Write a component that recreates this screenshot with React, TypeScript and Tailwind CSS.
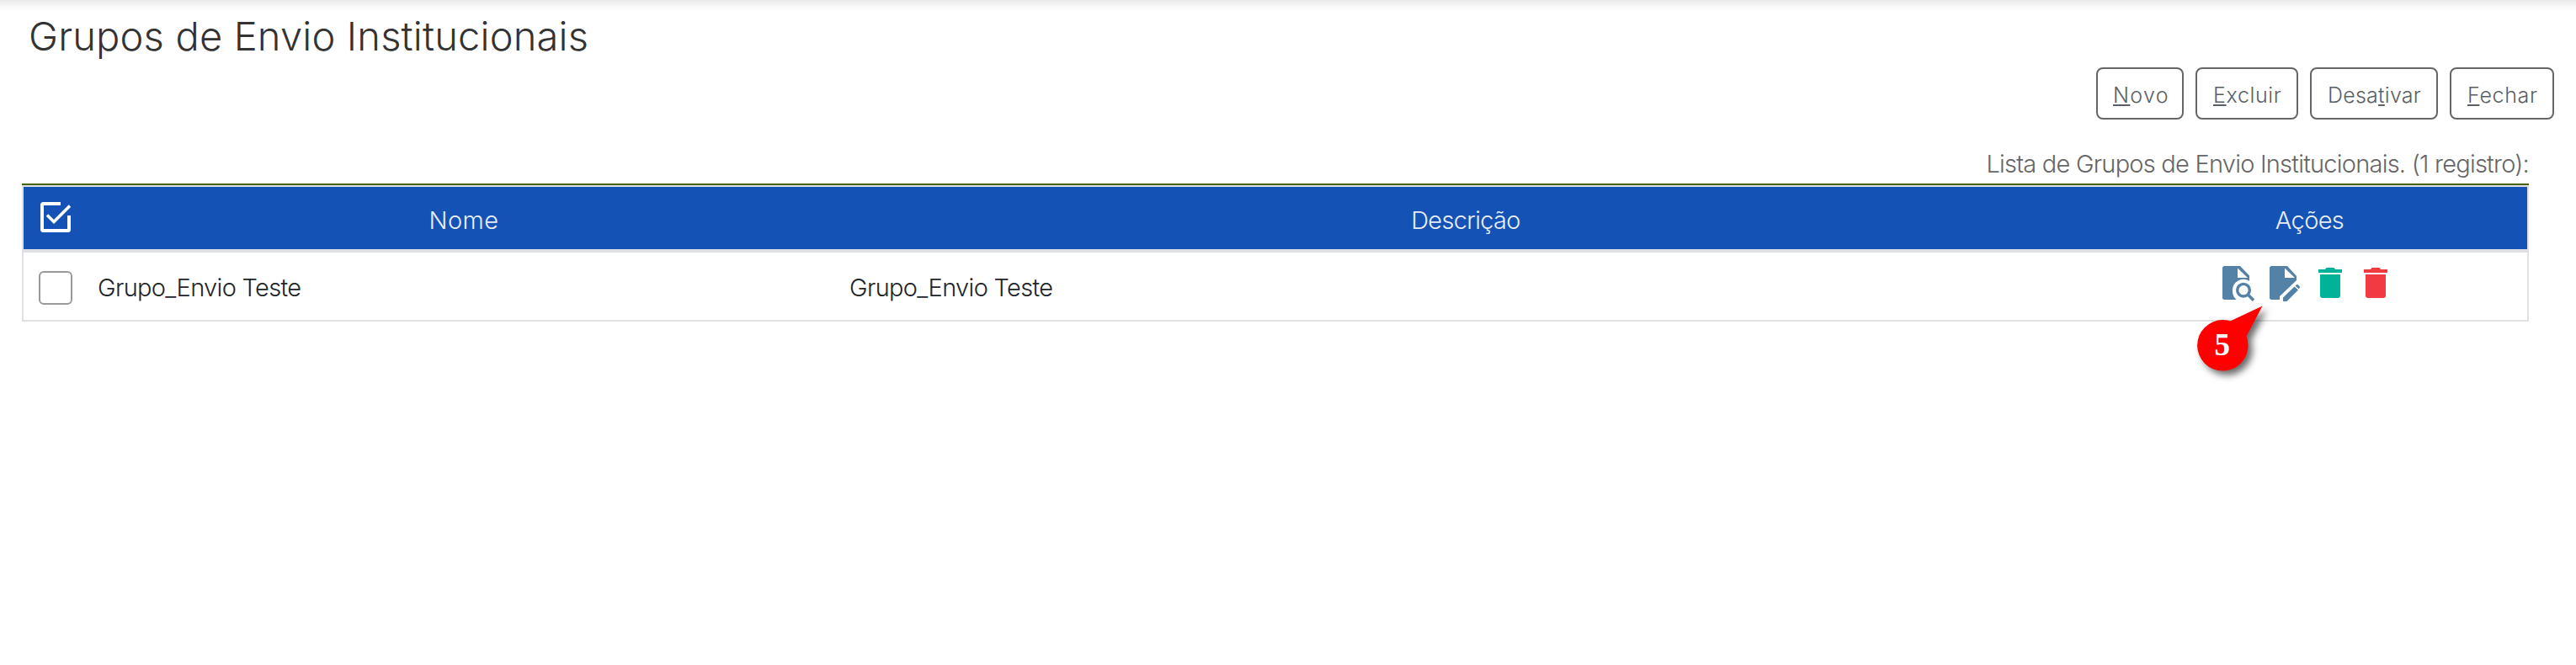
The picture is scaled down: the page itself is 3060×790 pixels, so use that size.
import type { ReactNode } from "react";

function ActionButton({ className, children }: { className: string; children: ReactNode }) {
  return (
    <button
      className={`flex h-[62px] items-center rounded-lg border-2 border-[#666] bg-white pt-[3px] text-[25px] leading-[32px] font-light whitespace-nowrap text-[#5a5f66] ${className}`}
    >
      <span>{children}</span>
    </button>
  );
}

function Key({ children }: { children: ReactNode }) {
  return <span className="underline decoration-[2px] underline-offset-[2px]">{children}</span>;
}

function CheckAllIcon() {
  return (
    <svg width="36" height="36" viewBox="0 0 36 36" fill="none" stroke="#fff" strokeWidth="4">
      <path d="M24 2H3.5Q2 2 2 3.5V32.500Q2 34 3.500 34H32.500Q34 34 34 32.500V16" />
      <path d="M8 15.500L16 23.500L35 4.500" strokeWidth="3.600" />
    </svg>
  );
}

function ViewIcon() {
  return (
    <svg width="40" height="44" viewBox="0 0 40 44" fill="none">
      <path d="M2.500 0H21L32 11.500V18H26A12.500 12.500 0 0 0 16.500 40H2.500Q0 40 0 37.500V2.500Q0 0 2.500 0Z" fill="#5382a6" />
      <path d="M18 2.500V14H30Z" fill="#fff" />
      <circle cx="25" cy="28.700" r="13" fill="#fff" />
      <circle cx="25" cy="28.700" r="7.300" stroke="#5382a6" strokeWidth="3.400" />
      <path d="M30 33.700L37 40.700" stroke="#5382a6" strokeWidth="3.600" />
    </svg>
  );
}

function EditIcon() {
  return (
    <svg width="40" height="44" viewBox="0 0 40 44" fill="none">
      <path d="M2.500 0H21L32 12V17L12 36V40H2.500Q0 40 0 37.500V2.500Q0 0 2.500 0Z" fill="#5382a6" />
      <path d="M18 2.500V14H30Z" fill="#fff" />
      <path d="M16 42V37.500L29.500 24.500L34 28.500L20.500 42Z" fill="#5382a6" />
      <path d="M30.500 23.500L32.300 22Q33 21.500 33.700 22.200L35.800 24.400Q36.400 25.200 35.700 26L34.700 27.200Z" fill="#5382a6" />
    </svg>
  );
}

function TrashIcon({ fill }: { fill: string }) {
  return (
    <svg width="28" height="36" viewBox="0 0 28 36" fill={fill}>
      <path d="M0 2H8L9.500 0H18.500L20 2H28V6H0Z" />
      <path d="M2 8H26V33Q26 36 23 36H5Q2 36 2 33Z" />
    </svg>
  );
}

function Marker() {
  return (
    <div className="absolute top-[60px] left-[119px] h-[100px] w-[100px]">
      <svg width="100" height="100" viewBox="0 0 100 100" className="absolute inset-0 overflow-visible drop-shadow-[5px_5px_4px_rgba(0,0,0,0.6)]">
        <circle cx="32.300" cy="50.300" r="30.200" fill="#f00" />
        <path d="M38 23L79.500 3.500L58 44Z" fill="#f00" />
      </svg>
      <span className="absolute top-[29px] left-[2px] w-[59px] text-center font-['Liberation_Serif',serif] text-[37px] leading-[42px] font-bold text-white">
        5
      </span>
    </div>
  );
}

export default function App() {
  return (
    <div className="h-[790px] w-[3060px] overflow-hidden bg-white bg-[linear-gradient(to_bottom,#e9e9e9_0px,#f1f1f1_4px,#fafafa_9px,#ffffff_14px)] font-['Inter',sans-serif] font-light text-[#212529]">
      <header className="h-20 pt-[17px] pl-[34px]">
        <h1 className="text-[47px] leading-[52px] font-light tracking-[0.18px] text-[#333]">Grupos de Envio Institucionais</h1>
      </header>

      <div className="flex justify-end gap-[14px] pr-[26px]">
        <ActionButton className="w-[104px] pl-[18px] tracking-[1.3px]"><Key>N</Key>ovo</ActionButton>
        <ActionButton className="w-[122px] pl-[19px] tracking-[0.65px]"><Key>E</Key>xcluir</ActionButton>
        <ActionButton className="w-[152px] pl-[19px] tracking-[0.25px]">Desa<Key>t</Key>ivar</ActionButton>
        <ActionButton className="w-[124px] pl-[19px] tracking-[0.65px]"><Key>F</Key>echar</ActionButton>
      </div>

      <main className="mr-[56px] ml-[26px]">
        <p className="flex h-[76px] justify-end pt-[35px] text-[29px] leading-[36px] tracking-[-0.77px] whitespace-nowrap text-[#666]">
          Lista de Grupos de Envio Institucionais. (1 registro):
        </p>
        <div className="border-t-2 border-[#476200]">
          <div className="border-2 border-[#e0e1e4] text-[29px] leading-[36px]">
            <div className="grid h-[78px] grid-cols-[76px_889px_1496px_1fr] items-center border-b-4 border-[#dee0e6] bg-[#1452b5] text-center text-[#e9edf5]">
              <div className="pb-[2px] pl-5"><CheckAllIcon /></div>
              <div className="pt-[5px] pl-[5px] tracking-[0.4px]">Nome</div>
              <div className="pt-[5px] tracking-[-0.7px]">Descrição</div>
              <div className="pt-[5px] pr-[4px] tracking-[-0.65px]">Ações</div>
            </div>
            <div className="grid h-20 grid-cols-[76px_889px_1496px_1fr] tracking-[-0.68px]">
              <div className="pt-[22px] pl-[18px]">
                <div className="h-10 w-10 rounded-md border-2 border-[#999] bg-white" />
              </div>
              <div className="pt-[24px] pl-[12px]">Grupo_Envio Teste</div>
              <div className="pt-[24px] pl-[16px]">Grupo_Envio Teste</div>
              <div className="relative flex items-start pt-4 pl-[151px]">
                <div className="mr-4"><ViewIcon /></div>
                <div className="mr-[18px]"><EditIcon /></div>
                <div className="mt-[2px] mr-[26px]"><TrashIcon fill="#00b398" /></div>
                <div className="mt-[2px]"><TrashIcon fill="#f23a42" /></div>
                <Marker />
              </div>
            </div>
          </div>
        </div>
      </main>
    </div>
  );
}
